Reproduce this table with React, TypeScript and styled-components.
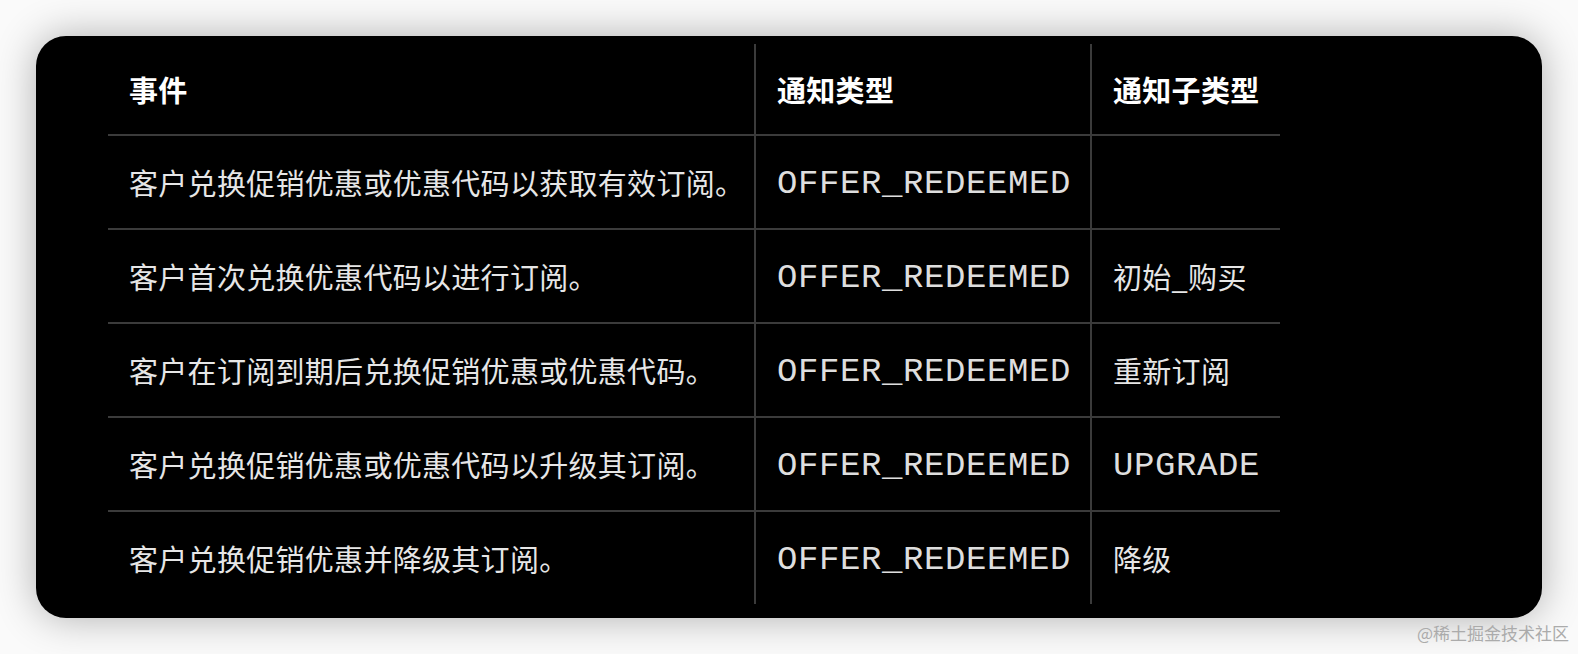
import React from "react";
import styled, { createGlobalStyle } from "styled-components";

const GlobalStyle = createGlobalStyle`
  html, body {
    margin: 0;
    padding: 0;
    background: #fafafa;
  }
  body {
    font-family: "Noto Sans CJK SC", "Noto Sans", sans-serif;
  }
`;

const Page = styled.div`
  position: relative;
  width: 1578px;
  height: 654px;
  box-sizing: border-box;
  padding: 36px 36px 0 36px;
  background: #fafafa;
  overflow: hidden;
`;

const Card = styled.div`
  width: 1506px;
  height: 582px;
  box-sizing: border-box;
  padding: 8px 0 0 72px;
  background: #000;
  border-radius: 30px;
  box-shadow: 0 0 40px rgba(0, 0, 0, 0.3);
`;

const Table = styled.div`
  display: grid;
  grid-template-columns: 646px 336px 190px;
  width: 1172px;
`;

const Cell = styled.div<{ $col: number; $head?: boolean; $last?: boolean; $mono?: boolean }>`
  box-sizing: border-box;
  height: ${(p) => (p.$head ? 92 : p.$last ? 92 : 94)}px;
  display: flex;
  align-items: center;
  padding: ${(p) => (p.$mono ? "4px" : "0")} 0 0 21px;
  border-bottom: ${(p) => (p.$last ? "none" : "2px solid #3b3b3b")};
  border-left: ${(p) => (p.$col === 0 ? "none" : "2px solid #3b3b3b")};
  color: ${(p) => (p.$head ? "#ffffff" : p.$mono ? "#dedede" : "#e6e6e6")};
  font-family: ${(p) =>
    p.$mono
      ? '"Liberation Mono", "Noto Sans CJK SC", monospace'
      : '"Noto Sans CJK SC", "Noto Sans", sans-serif'};
  font-size: ${(p) => (p.$mono ? "34px" : "29px")};
  font-weight: ${(p) => (p.$head ? 700 : 400)};
  letter-spacing: ${(p) => (p.$mono ? "0.6px" : "0.3px")};
  white-space: nowrap;
`;

const Watermark = styled.div`
  position: absolute;
  right: 9px;
  bottom: 9px;
  font-family: "Noto Sans CJK SC", sans-serif;
  font-size: 17px;
  color: #ababab;
`;

type Row = { event: string; type: string; sub: string; subMono?: boolean };

const rows: Row[] = [
  { event: "客户兑换促销优惠或优惠代码以获取有效订阅。", type: "OFFER_REDEEMED", sub: "" },
  { event: "客户首次兑换优惠代码以进行订阅。", type: "OFFER_REDEEMED", sub: "初始_购买" },
  { event: "客户在订阅到期后兑换促销优惠或优惠代码。", type: "OFFER_REDEEMED", sub: "重新订阅" },
  { event: "客户兑换促销优惠或优惠代码以升级其订阅。", type: "OFFER_REDEEMED", sub: "UPGRADE", subMono: true },
  { event: "客户兑换促销优惠并降级其订阅。", type: "OFFER_REDEEMED", sub: "降级" },
];

export default function App() {
  return (
    <>
      <GlobalStyle />
      <Page>
        <Card>
          <Table>
            <Cell $col={0} $head>事件</Cell>
            <Cell $col={1} $head>通知类型</Cell>
            <Cell $col={2} $head>通知子类型</Cell>
            {rows.map((r, i) => {
              const last = i === rows.length - 1;
              return (
                <React.Fragment key={i}>
                  <Cell $col={0} $last={last}>{r.event}</Cell>
                  <Cell $col={1} $last={last} $mono>{r.type}</Cell>
                  <Cell $col={2} $last={last} $mono={r.subMono}>{r.sub}</Cell>
                </React.Fragment>
              );
            })}
          </Table>
        </Card>
        <Watermark>@稀土掘金技术社区</Watermark>
      </Page>
    </>
  );
}
